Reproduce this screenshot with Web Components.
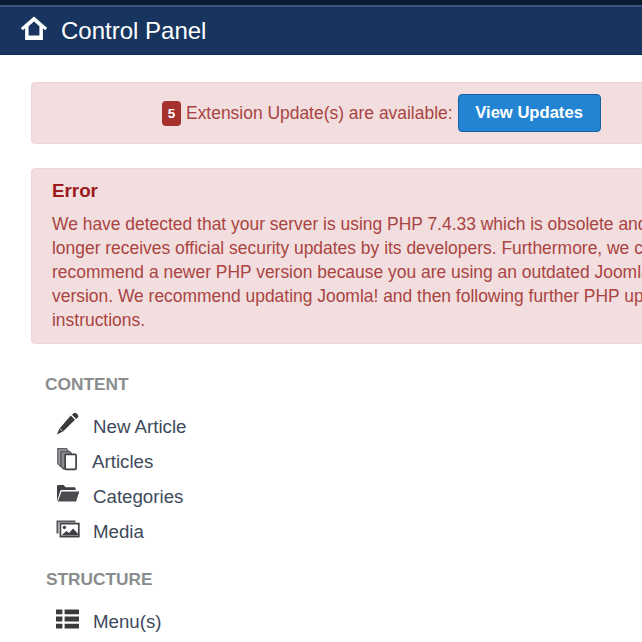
<!DOCTYPE html>
<html>
<head>
<meta charset="utf-8">
<style>
  html, body { margin:0; height:100%; overflow:hidden; background:#fff; font-family:"Liberation Sans", Arial, sans-serif; }
  body { width:642px; height:642px; }
</style>
</head>
<body>
<cp-header>Control Panel</cp-header>
<cp-main>
  <cp-alert centered>
    <cp-badge>5</cp-badge>
    <span>Extension Update(s) are available:</span>
    <cp-button>View Updates</cp-button>
  </cp-alert>
  <cp-alert heading="Error" style="margin-top:24px">We have detected that your server is using PHP 7.4.33 which is obsolete and<br>longer receives official security updates by its developers. Furthermore, we c<br>recommend a newer PHP version because you are using an outdated Joomla<br>version. We recommend updating Joomla! and then following further PHP up<br>instructions.</cp-alert>
  <cp-section heading="CONTENT" style="margin-top:28px">
    <cp-link text="New Article" icon="pencil"></cp-link>
    <cp-link text="Articles" icon="copy" style="--tx:-1px"></cp-link>
    <cp-link text="Categories" icon="folder"></cp-link>
    <cp-link text="Media" icon="images"></cp-link>
  </cp-section>
  <cp-section heading="STRUCTURE" style="margin-top:18px;--hx:1px">
    <cp-link text="Menu(s)" icon="list"></cp-link>
  </cp-section>
</cp-main>
<script>
const ICONS = {
  home: '<path d="M14 1.5 .8 12.9l2 2.3 2.3-2v11.9h17.8V13.2l2.3 2 2-2.3zM8.6 20.6v-9.3L14 6.6l5.4 4.7v9.3z" fill="#fff"/>',
  pencil: '<path d="M17.6 1.2c.8-.7 2-.7 2.8.1l1.3 1.4c.8.8.8 2 .1 2.8l-1.6 1.6-4.2-4.3zM14.8 3.4 19 7.7 7 19.6l-6.2 3 2.8-6.2z" fill="#3a3a3c"/><path d="M3.9 16.6l2.3 2.3" stroke="#fff" stroke-width=".9"/>',
  copy: '<path d="M1.8 1.8h8.6l1.6 1.7v15.6H4.2l-2.4-2.6z" fill="#9a9aa2" stroke="#66666c" stroke-width="1.4"/><path d="M5 4.6h8.6l1.6 1.7v15.6H7.4L5 19.3z" fill="#8c8c94" stroke="#55555a" stroke-width="1.4"/><rect x="9.1" y="7.3" width="11" height="15" rx="1" fill="#fff" stroke="#3f3f44" stroke-width="1.7"/>',
  folder: '<path d="M1 19.5V4.5c0-.8.6-1.4 1.4-1.4h5.2l2 2.2h8.6c.8 0 1.4.6 1.4 1.4V8H6c-.9 0-1.6.5-1.9 1.3z" fill="#3f3f44"/><path d="M5.5 9.5h17.8l-3.2 10H1.9z" fill="#4c4c50"/>',
  images: '<path d="M.5 3.5h19v2H2.5v11h-2z" fill="#55555a"/><rect x="4.4" y="6.6" width="18.4" height="13" fill="#fff" stroke="#3f3f44" stroke-width="1.7"/><circle cx="8.4" cy="10.4" r="1.7" fill="#3f3f44"/><path d="M5.4 18.6l5-4.6 2.6 2 4-4.4 4.8 5v2z" fill="#3f3f44"/>',
  list: '<path d="M0 2.5h6.4v4.8H0zM8.6 2.5H23v4.8H8.6zM0 9.6h6.4v4.8H0zM8.6 9.6H23v4.8H8.6zM0 16.7h6.4v4.8H0zM8.6 16.7H23v4.8H8.6z" fill="#3a3a3c"/>'
};

function icon(name, w, h) {
  return `<svg width="${w}" height="${h}" viewBox="0 0 24 24" aria-hidden="true">${ICONS[name]}</svg>`;
}

class CpHeader extends HTMLElement {
  constructor() {
    super();
    this.attachShadow({ mode: 'open' }).innerHTML = `
      <style>
        :host{ display:block; height:55px; box-sizing:border-box; background:#17355f; border-top:5px solid #0b1a33; box-shadow:inset 0 2px 0 #3a5580; border-bottom:1px solid #0f2a50; }
        .bar{ display:flex; align-items:center; height:49px; padding-left:20px; gap:13px; color:#fff; font-size:24px; padding-top:3px; box-sizing:border-box; }
        svg{ display:block; margin-top:-4px; }
      </style>
      <div class="bar"><svg width="28" height="28" viewBox="0 0 28 28">${ICONS.home}</svg><slot></slot></div>`;
  }
}

class CpMain extends HTMLElement {
  constructor() {
    super();
    this.attachShadow({ mode: 'open' }).innerHTML = `
      <style>:host{ display:block; padding:27px 0 0 31px; width:720px; }</style><slot></slot>`;
  }
}

class CpAlert extends HTMLElement {
  constructor() {
    super();
    this.attachShadow({ mode: 'open' }).innerHTML = `
      <style>
        :host{ display:block; box-sizing:border-box; background:#f2dede; border:1px solid #eed3d7; border-radius:4px; color:#a94442; font-size:17.45px; line-height:24px; padding:10px 20px 11px; white-space:nowrap; }
        :host([centered]){ padding:0; height:62px; }
        h4{ margin:0 0 9px; font-size:18.8px; line-height:24px; font-weight:bold; color:#9c1a1c; }
        .row{ display:flex; align-items:center; gap:5px; height:100%; padding-left:130px; }
      </style>
      <h4 hidden></h4><div id="body"><slot></slot></div>`;
  }
  connectedCallback() {
    const h = this.shadowRoot.querySelector('h4');
    if (this.hasAttribute('heading')) { h.textContent = this.getAttribute('heading'); h.hidden = false; }
    if (this.hasAttribute('centered')) this.shadowRoot.getElementById('body').className = 'row';
  }
}

class CpBadge extends HTMLElement {
  constructor() {
    super();
    this.attachShadow({ mode: 'open' }).innerHTML = `
      <style>:host{ display:block; width:19px; height:25px; box-sizing:border-box; background:#a5302e; border-radius:4px; color:#fff; font-size:13.5px; font-weight:bold; line-height:26px; text-align:center; }</style><slot></slot>`;
  }
}

class CpButton extends HTMLElement {
  constructor() {
    super();
    this.attachShadow({ mode: 'open' }).innerHTML = `
      <style>:host{ display:block; box-sizing:border-box; width:143px; height:38px; margin-left:0; background:#2384d3; border:1px solid #1a5f9e; border-radius:4px; color:#fff; font-size:16.6px; font-weight:bold; line-height:35px; text-align:center; }</style><slot></slot>`;
  }
}

class CpSection extends HTMLElement {
  constructor() {
    super();
    this.attachShadow({ mode: 'open' }).innerHTML = `
      <style>
        :host{ display:block; padding-left:14px; }
        h3{ margin:0 0 13px; padding-left:var(--hx,0); font-size:17.3px; line-height:24px; font-weight:bold; color:#8a8d8d; }
        .links{ display:flex; flex-direction:column; padding-left:12px; }
      </style>
      <h3></h3><div class="links"><slot></slot></div>`;
  }
  connectedCallback() {
    this.shadowRoot.querySelector('h3').textContent = this.getAttribute('heading');
  }
}

class CpLink extends HTMLElement {
  constructor() {
    super();
    this.attachShadow({ mode: 'open' }).innerHTML = `
      <style>
        :host{ display:flex; align-items:center; height:35px; color:#3d4a5c; font-size:18.7px; }
        .ic{ width:24px; margin:0 13px 0 -1px; position:relative; top:-3px; display:flex; }
        .t{ margin-left:var(--tx,0); }
      </style>
      <span class="ic"></span><span class="t"></span>`;
  }
  connectedCallback() {
    this.shadowRoot.querySelector('.ic').innerHTML = icon(this.getAttribute('icon'), 24, 24);
    this.shadowRoot.querySelector('.t').textContent = this.getAttribute('text');
  }
}

customElements.define('cp-header', CpHeader);
customElements.define('cp-main', CpMain);
customElements.define('cp-alert', CpAlert);
customElements.define('cp-badge', CpBadge);
customElements.define('cp-button', CpButton);
customElements.define('cp-section', CpSection);
customElements.define('cp-link', CpLink);
</script>
</body>
</html>
